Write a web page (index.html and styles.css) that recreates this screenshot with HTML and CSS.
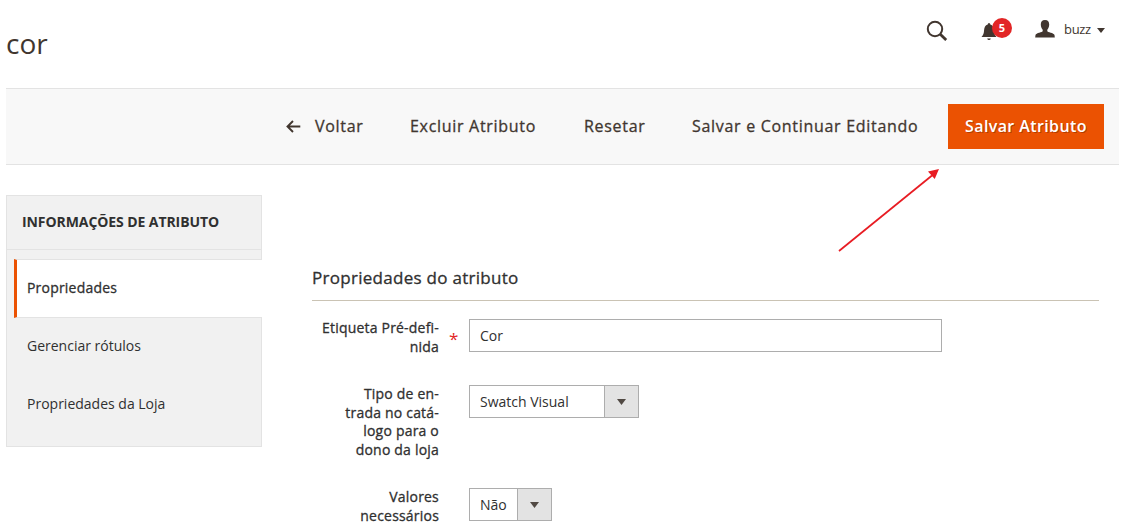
FILE: index.html
```html
<!DOCTYPE html>
<html lang="pt-BR">
<head>
<meta charset="utf-8">
<title>cor</title>
<link rel="stylesheet" href="styles.css">
</head>
<body>
<header class="header">
  <h1 class="title">cor</h1>
  <div class="tools">
    <svg class="search" width="22" height="22" viewBox="0 0 22 22"><circle cx="9" cy="9" r="7.2" fill="none" stroke="#41362f" stroke-width="2"/><path d="M14 14l6.2 6" stroke="#41362f" stroke-width="2.8"/></svg>
    <div class="notifications">
      <svg width="16" height="18" viewBox="0 0 16 18"><path d="M8 0q1.3 0 1.3 1.5c2.5.7 3.4 2.9 3.6 5.5.2 3.2.7 5 2.6 7H.5c1.900-2 2.400-3.800 2.600-7 .2-2.600 1.100-4.800 3.600-5.500Q6.700 0 8 0zM6.200 15.500h3.600Q9.500 17 8 17t-1.800-1.500z" fill="#41362f"/></svg>
      <span class="badge">5</span>
    </div>
    <div class="user">
      <svg width="20" height="18" viewBox="0 0 20 18"><path d="M10 0c3 0 4.300 1.900 4.200 4.600-.1 2.500-.8 4-1.900 5.100v1.500c0 1 6.700 1.500 7.200 3.800l.3 2.500H.2l.3-2.500c.5-2.300 7.200-2.800 7.200-3.800V9.700C6.600 8.600 5.900 7.100 5.800 4.600 5.700 1.900 7 0 10 0z" fill="#41362f"/></svg>
      <span class="user-name">buzz</span>
      <svg class="caret" width="8" height="5" viewBox="0 0 8 5"><path d="M0 0h8L4 5z" fill="#41362f"/></svg>
    </div>
  </div>
</header>
<nav class="toolbar">
  <button class="action back"><svg width="15" height="13" viewBox="0 0 15 13"><path d="M14.300 6.500H1.500M7 1L1.500 6.500 7 12" fill="none" stroke="#41362f" stroke-width="1.900"/></svg><span>Voltar</span></button>
  <button class="action delete">Excluir Atributo</button>
  <button class="action reset">Resetar</button>
  <button class="action continue">Salvar e Continuar Editando</button>
  <button class="action primary">Salvar Atributo</button>
</nav>
<div class="columns">
  <aside class="sidebar">
    <h2 class="sidebar-title">INFORMAÇÕES DE ATRIBUTO</h2>
    <ul class="tabs">
      <li class="tab active">Propriedades</li>
      <li class="tab labels">Gerenciar rótulos</li>
      <li class="tab store">Propriedades da Loja</li>
    </ul>
  </aside>
  <main class="main">
    <h2 class="legend">Propriedades do atributo</h2>
    <div class="field first">
      <label class="label">Etiqueta Pré-defi-<br>nida</label><span class="required">*</span>
      <div class="input">Cor</div>
    </div>
    <div class="field second">
      <label class="label">Tipo de en-<br>trada no catá-<br>logo para o<br>dono da loja</label><span class="required"></span>
      <div class="select"><span class="value">Swatch Visual</span><span class="arrow"><svg width="9" height="6" viewBox="0 0 9 6"><path d="M0 0h9L4.500 6z" fill="#514943"/></svg></span></div>
    </div>
    <div class="field">
      <label class="label">Valores<br>necessários</label><span class="required"></span>
      <div class="select small"><span class="value">Não</span><span class="arrow"><svg width="9" height="6" viewBox="0 0 9 6"><path d="M0 0h9L4.500 6z" fill="#514943"/></svg></span></div>
    </div>
  </main>
</div>
<svg class="pointer" width="110" height="90" viewBox="0 0 110 90"><path d="M4 86L97 10.500" stroke="#e81c23" stroke-width="1.700"/><path d="M104 4L93 6.500 99.700 14z" fill="#e81c23"/></svg>
</body>
</html>
```
FILE: styles.css
```css
* { box-sizing: border-box; }
body { margin: 0; width: 1123px; height: 529px; overflow: hidden; background: #fff; color: #303030; font-family: "Open Sans", "Noto Sans", sans-serif; font-size: 14px; }
h1, h2, ul { margin: 0; padding: 0; font-weight: 400; list-style: none; }
svg { display: block; flex: none; }
.header { height: 88px; padding: 0 18px 0 6px; display: flex; justify-content: space-between; }
.title { margin-top: 24px; font-size: 28px; line-height: 38px; color: #41362f; }
.tools { display: flex; margin-top: 20px; height: 20px; align-items: flex-start; }
.search { margin: 0 33px 0 0; }
.notifications { position: relative; width: 54px; padding-top: 3px; }
.badge { position: absolute; left: 11px; top: -2px; width: 20px; height: 20px; border-radius: 50%; background: #e22626; color: #fff; font-size: 11px; font-weight: 700; line-height: 20px; text-align: center; }
.user { display: flex; width: 70px; }
.user-name { margin-left: 9px; font-size: 13px; letter-spacing: -.3px; line-height: 18px; color: #41362f; }
.caret { margin: 8px 0 0 6px; }
.toolbar { margin: 0 4px 0 6px; height: 77px; padding: 15px 15px 0 0; border: solid #e3e3e3; border-width: 1px 0; background: #f8f8f8; display: grid; grid-template-columns: 124px 174px 108px 256px 156px; justify-content: end; }
.action { height: 45px; padding: 0; border: 0; background: none; color: #41362f; font: 500 16px/45px "Open Sans", sans-serif; letter-spacing: .7px; text-align: left; white-space: nowrap; -webkit-text-stroke: .3px; }
.back { display: flex; align-items: center; gap: 14px; }
.primary { background: #eb5202; color: #fff; font-weight: 600; letter-spacing: .4px; padding-left: 17px; text-shadow: 1px 1px 0 rgba(0,0,0,.25); -webkit-text-stroke: 0; }
.columns { display: flex; padding: 30px 24px 0 6px; gap: 50px; }
.sidebar { width: 256px; height: 252px; flex: none; background: #f1f1f1; border: 1px solid #e3e3e3; }
.sidebar-title { height: 54px; padding-left: 15px; border-bottom: 1px solid #e3e3e3; font-size: 14px; font-weight: 700; letter-spacing: -.08px; line-height: 51px; white-space: nowrap; }
.tabs { padding: 9px 0 0 7px; }
.tab { height: 58px; line-height: 55px; padding-left: 13px; white-space: nowrap; }
.active { height: 59px; margin-right: -1px; padding-left: 10px; border: solid #e3e3e3; border-width: 1px 0; border-left: 3px solid #eb5202; background: #fff; font-weight: 500; letter-spacing: .2px; line-height: 56px; -webkit-text-stroke: .3px; }
.main { flex: 1; padding-top: 70px; }
.legend { height: 36px; margin-bottom: 18px; border-bottom: 1px solid #cac3b4; font-size: 17px; font-weight: 500; letter-spacing: .28px; line-height: 26px; -webkit-text-stroke: .3px; }
.field { display: flex; }
.first { height: 66px; }
.second { height: 103px; }
.label { width: 127px; font-weight: 500; letter-spacing: .2px; line-height: 18.500px; text-align: right; white-space: nowrap; -webkit-text-stroke: .3px; }
.required { width: 30px; padding: 10px 0 0 10px; color: #e22626; font-size: 17px; line-height: 20px; }
.input { width: 473px; height: 33px; border: 1px solid #adadad; padding-left: 10px; line-height: 32px; }
.select { width: 170px; height: 33px; border: 1px solid #adadad; display: flex; }
.small { width: 83px; }
.value { flex: 1; padding-left: 10px; line-height: 32px; white-space: nowrap; }
.arrow { width: 34px; border-left: 1px solid #adadad; background: #e3e3e3; display: flex; align-items: center; justify-content: center; }
.pointer { position: absolute; left: 835px; top: 165px; }
```
